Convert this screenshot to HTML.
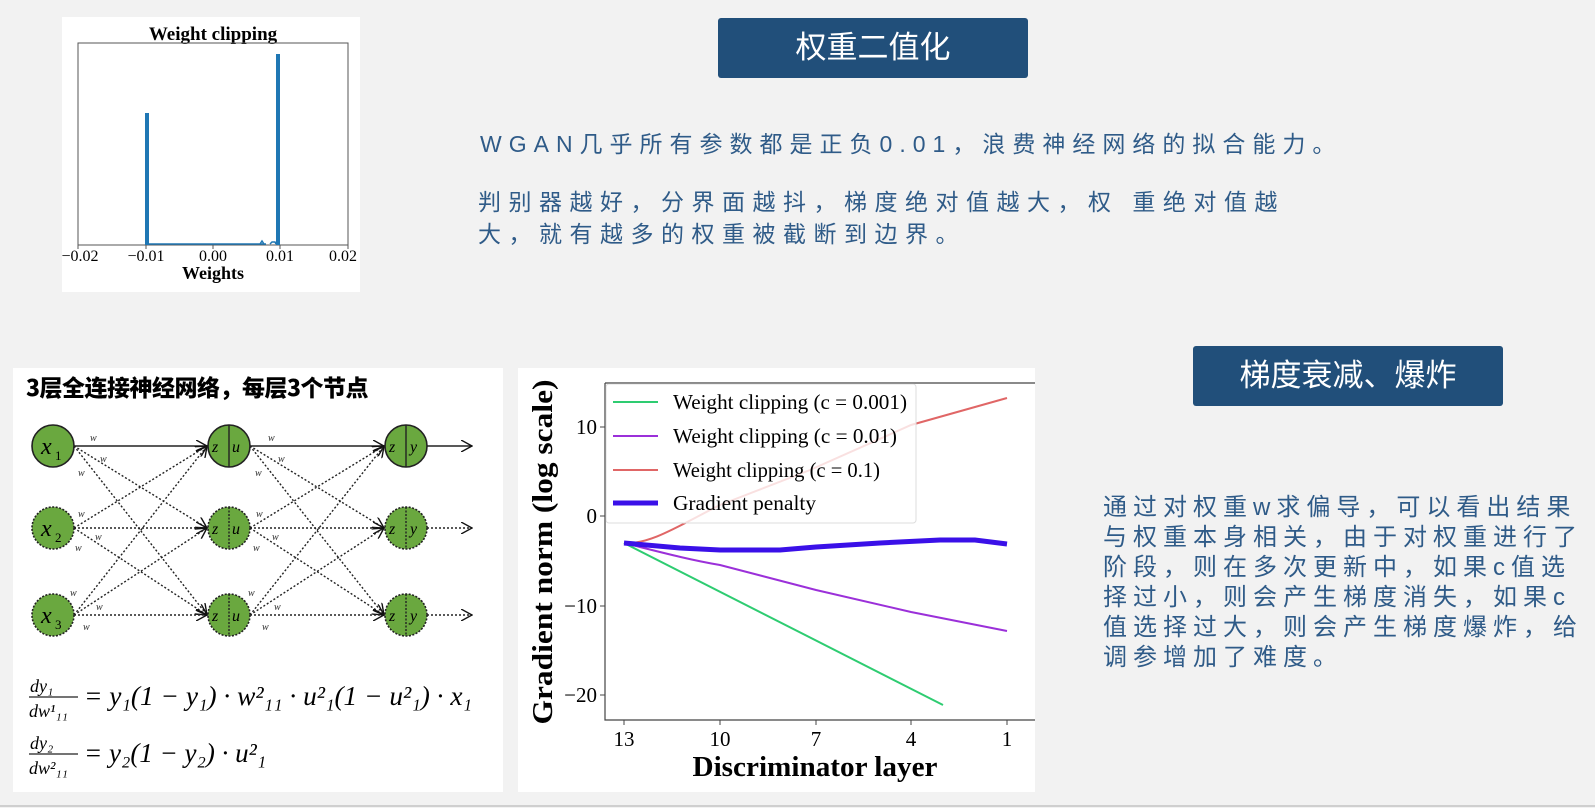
<!DOCTYPE html>
<html><head><meta charset="utf-8">
<style>
body{margin:0;width:1595px;height:808px;background:#f2f2f2;position:relative;overflow:hidden;font-family:"Liberation Sans","Noto Sans CJK SC",sans-serif}
.box{position:absolute;background:#214f7a;color:#fff;border-radius:3px;font-size:31px;text-align:center;line-height:60px}
.t{position:absolute;color:#2f5b88;white-space:nowrap}
.panel{position:absolute;background:#fff}
svg text{font-family:"Liberation Serif","DejaVu Serif",serif}
</style></head><body>
<div style="position:absolute;left:0;right:0;top:805px;height:2px;background:#cfcfcf"></div>

<div class="box" style="left:718px;top:18px;width:310px;height:60px">权重二值化</div>
<div class="box" style="left:1193px;top:346px;width:310px;height:60px">梯度衰减、爆炸</div>

<div class="t" style="left:480px;top:128px;font-size:23px;letter-spacing:7px;line-height:32px">WGAN几乎所有参数都是正负0.01，浪费神经网络的拟合能力。</div>
<div class="t" style="left:478px;top:186px;font-size:23px;letter-spacing:7.5px;line-height:32px">判别器越好，分界面越抖，梯度绝对值越大，权 重绝对值越<br>大，就有越多的权重被截断到边界。</div>

<div class="t" style="left:1103px;top:493px;font-size:24px;letter-spacing:6px;line-height:30px">通过对权重w求偏导，可以看出结果<br>与权重本身相关，由于对权重进行了<br>阶段，则在多次更新中，如果c值选<br>择过小，则会产生梯度消失，如果c<br>值选择过大，则会产生梯度爆炸，给<br>调参增加了难度。</div>

<!-- top-left histogram -->
<div class="panel" style="left:62px;top:17px;width:298px;height:275px">
<svg width="298" height="275" viewBox="62 17 298 275">
<text x="213" y="40" font-size="19" font-weight="bold" text-anchor="middle">Weight clipping</text>
<rect x="78" y="43" width="270" height="202" fill="none" stroke="#555" stroke-width="1"/>
<g stroke="#555"><line x1="78" y1="245" x2="78" y2="249"/><line x1="146" y1="245" x2="146" y2="249"/><line x1="213" y1="245" x2="213" y2="249"/><line x1="280" y1="245" x2="280" y2="249"/><line x1="348" y1="245" x2="348" y2="249"/></g>
<rect x="145" y="113" width="4" height="132" fill="#1f77b4"/>
<rect x="276" y="54" width="4" height="191" fill="#1f77b4"/>
<path d="M148 244 H 266 M260 244 l2 -3 l2 3 M270 244 l2 -2 l3 0 l1 2" stroke="#1f77b4" stroke-width="1.5" fill="none"/>
<g font-size="16" text-anchor="middle"><text x="80" y="261">−0.02</text><text x="146" y="261">−0.01</text><text x="213" y="261">0.00</text><text x="280" y="261">0.01</text><text x="343" y="261">0.02</text></g>
<text x="213" y="279" font-size="18" font-weight="bold" text-anchor="middle">Weights</text>
</svg></div>

<!-- network panel -->
<div class="panel" style="left:13px;top:368px;width:490px;height:424px">
<svg width="490" height="424" viewBox="13 368 490 424">
<defs><marker id="a" markerWidth="12" markerHeight="12" refX="11" refY="6" orient="auto" markerUnits="userSpaceOnUse"><path d="M0 0 L11 6 L0 12" fill="none" stroke="#111" stroke-width="1.4"/></marker></defs>
<text x="26" y="396" font-size="23" font-weight="900" style="font-family:'Noto Sans CJK SC',sans-serif;letter-spacing:-0.5px">3层全连接神经网络，每层3个节点</text>
<g stroke="#222" stroke-width="1.4" fill="none" marker-end="url(#a)">
<line x1="74" y1="446" x2="207" y2="446" />
<line x1="250" y1="446" x2="384" y2="446" />
<line x1="427" y1="446" x2="472" y2="446" />
</g>
<g stroke="#222" stroke-width="1.4" fill="none" stroke-dasharray="2 2" marker-end="url(#a)">
<line x1="74" y1="446" x2="207" y2="528"/><line x1="74" y1="446" x2="207" y2="615"/>
<line x1="74" y1="528" x2="207" y2="446"/><line x1="74" y1="528" x2="207" y2="528"/><line x1="74" y1="528" x2="207" y2="615"/>
<line x1="74" y1="615" x2="207" y2="446"/><line x1="74" y1="615" x2="207" y2="528"/><line x1="74" y1="615" x2="207" y2="615"/>
<line x1="250" y1="446" x2="384" y2="528"/><line x1="250" y1="446" x2="384" y2="615"/>
<line x1="250" y1="528" x2="384" y2="446"/><line x1="250" y1="528" x2="384" y2="528"/><line x1="250" y1="528" x2="384" y2="615"/>
<line x1="250" y1="615" x2="384" y2="446"/><line x1="250" y1="615" x2="384" y2="528"/><line x1="250" y1="615" x2="384" y2="615"/>
<line x1="427" y1="528" x2="472" y2="528"/><line x1="427" y1="615" x2="472" y2="615"/>
</g>
<g fill="#6aa83f" stroke="#222" stroke-width="1.6">
<circle cx="53" cy="446" r="21"/><circle cx="229" cy="446" r="21"/><circle cx="406" cy="446" r="21"/>
</g>
<g fill="#6aa83f" stroke="#222" stroke-width="1.6" stroke-dasharray="2 1.5">
<circle cx="53" cy="528" r="21"/><circle cx="229" cy="528" r="21"/><circle cx="406" cy="528" r="21"/>
<circle cx="53" cy="615" r="21"/><circle cx="229" cy="615" r="21"/><circle cx="406" cy="615" r="21"/>
</g>
<g stroke="#222" stroke-width="1.4"><line x1="229" y1="425" x2="229" y2="467"/><line x1="406" y1="425" x2="406" y2="467"/></g>
<g stroke="#222" stroke-width="1.4" stroke-dasharray="2 1.5"><line x1="229" y1="507" x2="229" y2="549"/><line x1="406" y1="507" x2="406" y2="549"/><line x1="229" y1="594" x2="229" y2="636"/><line x1="406" y1="594" x2="406" y2="636"/></g>
<g font-size="24" font-style="italic"><text x="41" y="454">x</text><text x="41" y="536">x</text><text x="41" y="623">x</text></g>
<g font-size="13"><text x="55" y="460">1</text><text x="55" y="542">2</text><text x="55" y="629">3</text></g>
<g font-size="16" font-style="italic"><text x="212" y="452">z</text><text x="232" y="452">u</text><text x="389" y="452">z</text><text x="410" y="452">y</text>
<text x="212" y="534">z</text><text x="232" y="534">u</text><text x="389" y="534">z</text><text x="410" y="534">y</text>
<text x="212" y="621">z</text><text x="232" y="621">u</text><text x="389" y="621">z</text><text x="410" y="621">y</text></g>
<g font-size="10" fill="#333" font-style="italic"><text x="90" y="441">w</text><text x="100" y="462">w</text><text x="78" y="476">w</text><text x="78" y="517">w</text><text x="95" y="540">w</text><text x="75" y="551">w</text><text x="70" y="596">w</text><text x="96" y="610">w</text><text x="83" y="630">w</text>
<text x="268" y="441">w</text><text x="278" y="462">w</text><text x="255" y="476">w</text><text x="256" y="517">w</text><text x="272" y="540">w</text><text x="253" y="551">w</text><text x="248" y="596">w</text><text x="274" y="610">w</text><text x="262" y="630">w</text></g>
<g font-size="27" font-style="italic">
<text x="30" y="692" font-size="18">dy₁</text><line x1="29" y1="697" x2="78" y2="697" stroke="#222" stroke-width="1.2"/><text x="29" y="717" font-size="18">dw¹₁₁</text>
<text x="84" y="705" textLength="388" lengthAdjust="spacingAndGlyphs">= y₁(1 − y₁) · w²₁₁ · u²₁(1 − u²₁) · x₁</text>
<text x="30" y="749" font-size="18">dy₂</text><line x1="29" y1="754" x2="78" y2="754" stroke="#222" stroke-width="1.2"/><text x="29" y="774" font-size="18">dw²₁₁</text>
<text x="84" y="762">= y₂(1 − y₂) · u²₁</text>
</g>
</svg></div>

<!-- gradient chart -->
<div class="panel" style="left:518px;top:368px;width:517px;height:424px">
<svg width="517" height="424" viewBox="518 368 517 424">
<g stroke="#444" stroke-width="1.2" fill="none"><path d="M605 383 H1035 M605 383 V720 H1035"/></g>
<g stroke="#444"><line x1="600" y1="427" x2="605" y2="427"/><line x1="600" y1="516" x2="605" y2="516"/><line x1="600" y1="606" x2="605" y2="606"/><line x1="600" y1="695" x2="605" y2="695"/>
<line x1="624" y1="720" x2="624" y2="725"/><line x1="720" y1="720" x2="720" y2="725"/><line x1="816" y1="720" x2="816" y2="725"/><line x1="911" y1="720" x2="911" y2="725"/><line x1="1007" y1="720" x2="1007" y2="725"/></g>
<g font-size="21" text-anchor="end"><text x="597" y="434">10</text><text x="597" y="523">0</text><text x="597" y="613">−10</text><text x="597" y="702">−20</text></g>
<g font-size="21" text-anchor="middle"><text x="624" y="746">13</text><text x="720" y="746">10</text><text x="816" y="746">7</text><text x="911" y="746">4</text><text x="1007" y="746">1</text></g>
<text x="815" y="776" font-size="28" font-weight="bold" text-anchor="middle" textLength="245" lengthAdjust="spacingAndGlyphs">Discriminator layer</text>
<text transform="translate(552,552) rotate(-90)" font-size="28" font-weight="bold" text-anchor="middle" textLength="345" lengthAdjust="spacingAndGlyphs">Gradient norm (log scale)</text>
<path d="M624 543 C650 545 680 525 720 505 L810 470 L911 425 L1007 398" stroke="#e06666" stroke-width="2" fill="none"/>
<path d="M624 543 C660 552 690 560 720 565 L816 590 L911 612 L1007 631" stroke="#9b30d9" stroke-width="2" fill="none"/>
<path d="M624 543 L943 705" stroke="#2ecc71" stroke-width="2" fill="none"/>
<path d="M624 543 L680 548 L720 550 L780 550 L816 547 L880 543 L940 540 L975 540 L1007 544" stroke="#3a10e8" stroke-width="5" fill="none"/>
<rect x="606" y="384" width="310" height="139" rx="3" fill="#fff" fill-opacity="0.8" stroke="#ddd"/>
<g stroke-width="2"><line x1="613" y1="402" x2="658" y2="402" stroke="#2ecc71"/><line x1="613" y1="436" x2="658" y2="436" stroke="#9b30d9"/><line x1="613" y1="470" x2="658" y2="470" stroke="#e06666"/><line x1="613" y1="503" x2="658" y2="503" stroke="#3a10e8" stroke-width="5"/></g>
<g font-size="21"><text x="673" y="409" textLength="234" lengthAdjust="spacingAndGlyphs">Weight clipping (c = 0.001)</text><text x="673" y="443" textLength="224" lengthAdjust="spacingAndGlyphs">Weight clipping (c = 0.01)</text><text x="673" y="477" textLength="207" lengthAdjust="spacingAndGlyphs">Weight clipping (c = 0.1)</text><text x="673" y="510" textLength="143" lengthAdjust="spacingAndGlyphs">Gradient penalty</text></g>
</svg></div>
</body></html>
